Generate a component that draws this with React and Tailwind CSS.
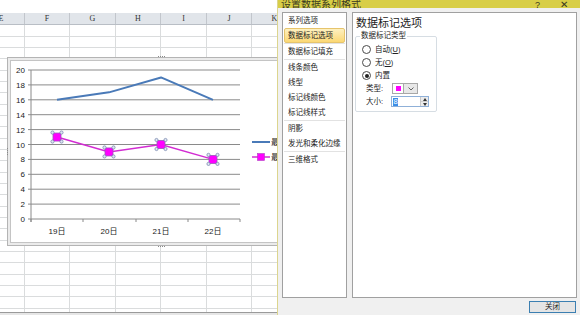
import React from "react";

const COLS = [
  { l: "E", w: "w-[47px] -ml-[22px]" },
  { l: "F", w: "w-[45px]" },
  { l: "G", w: "w-[46px]" },
  { l: "H", w: "w-[45px]" },
  { l: "I", w: "w-[46px]" },
  { l: "J", w: "w-[45px]" },
  { l: "K", w: "w-[46px]" },
];

const ROWS = Array.from({ length: 26 }, (_, i) => (i % 3 === 0 ? "h-[12px]" : "h-[11px]"));

const yv = (v) => 219 - v * 7.45;
const XS = [57, 109, 161, 213];
const S1 = [16, 17, 19, 16];
const S2 = [11, 9, 10, 8];

function Marker({ x, y }) {
  return (
    <g>
      <rect x={x - 4} y={y - 4} width="8" height="8" fill="#ff00ff" stroke="#a050c0" strokeWidth="0.8" />
      {[
        [x - 4.5, y - 4.5],
        [x + 4.5, y - 4.5],
        [x - 4.5, y + 4.5],
        [x + 4.5, y + 4.5],
      ].map(([cx, cy], i) => (
        <circle key={i} cx={cx} cy={cy} r="1.6" fill="#dfe5f2" stroke="#6f7fa8" strokeWidth="0.7" />
      ))}
    </g>
  );
}

function Chart() {
  const grid = Array.from({ length: 11 }, (_, i) => i * 2);
  return (
    <div className="absolute left-[7px] top-[57px] w-[295px] h-[189px] border border-[#b4b4b4] bg-[#ebebeb] p-[2px]">
      <div className="w-full h-full border border-[#c4c4c4] bg-white">
        <svg width="287" height="181" viewBox="11 61 287 181" className="block">
          {grid.map((v) => (
            <g key={v}>
              <line x1="28" x2="240" y1={yv(v)} y2={yv(v)} stroke="#8a8a8a" strokeWidth="1" />
              <text x="25" y={yv(v) + 3} textAnchor="end" fontSize="8" fill="#222" fontFamily="Liberation Sans, sans-serif">
                {v}
              </text>
            </g>
          ))}
          <line x1="31" x2="31" y1={yv(20)} y2={yv(0) + 3} stroke="#8a8a8a" strokeWidth="1" />
          {[31, 83, 136, 188, 240].map((x) => (
            <line key={x} x1={x} x2={x} y1={yv(0)} y2={yv(0) + 3} stroke="#8a8a8a" strokeWidth="1" />
          ))}
          {["19日", "20日", "21日", "22日"].map((t, i) => (
            <text key={t} x={XS[i]} y="234" textAnchor="middle" fontSize="8" fill="#222" fontFamily="Liberation Sans, Noto Sans CJK SC, sans-serif">
              {t}
            </text>
          ))}
          <polyline
            points={XS.map((x, i) => `${x},${yv(S1[i])}`).join(" ")}
            fill="none"
            stroke="#4a7ab8"
            strokeWidth="2"
            strokeLinejoin="round"
          />
          <polyline
            points={XS.map((x, i) => `${x},${yv(S2[i])}`).join(" ")}
            fill="none"
            stroke="#d22cd2"
            strokeWidth="1.5"
          />
          {XS.map((x, i) => (
            <Marker key={i} x={x} y={yv(S2[i])} />
          ))}
          <line x1="252" x2="270" y1="142" y2="142" stroke="#4a7ab8" strokeWidth="2" />
          <text x="271" y="145" fontSize="8" fill="#222" fontFamily="Noto Sans CJK SC, sans-serif">最</text>
          <line x1="252" x2="270" y1="157" y2="157" stroke="#d22cd2" strokeWidth="1.5" />
          <rect x="257.5" y="153.5" width="7" height="7" fill="#ff00ff" stroke="#b040c0" strokeWidth="0.6" />
          <text x="271" y="160" fontSize="8" fill="#222" fontFamily="Noto Sans CJK SC, sans-serif">最</text>
        </svg>
      </div>
      <div className="absolute left-[150px] top-[-2px] flex gap-[1px]">
        {[0, 1, 2, 3].map((i) => (
          <span key={i} className="w-[1px] h-[1px] bg-[#8a8a8a]" />
        ))}
      </div>
      <div className="absolute left-[150px] bottom-[-2px] flex gap-[1px]">
        {[0, 1, 2, 3].map((i) => (
          <span key={i} className="w-[1px] h-[1px] bg-[#8a8a8a]" />
        ))}
      </div>
      <div className="absolute left-[-1px] top-[90px] flex flex-col gap-[1px]">
        {[0, 1, 2, 3].map((i) => (
          <span key={i} className="w-[1px] h-[1px] bg-[#8a8a8a]" />
        ))}
      </div>
    </div>
  );
}

function Sheet() {
  return (
    <div className="flex flex-col h-full">
      <div className="h-[13px] shrink-0" />
      <div className="flex h-[12px] shrink-0 bg-[#e1e5ea] border-b border-[#b9bec5]">
        {COLS.map((c) => (
          <div
            key={c.l}
            className={`${c.w} shrink-0 border-r border-[#c2c6cc] flex items-center justify-center text-[8px] leading-none text-[#333] font-['Liberation_Serif',serif]`}
          >
            {c.l}
          </div>
        ))}
      </div>
      <div className="flex-1 overflow-hidden">
        {ROWS.map((h, r) => (
          <div key={r} className={`flex ${h} border-b border-[#dadcdd]`}>
            {COLS.map((c) => (
              <div key={c.l} className={`${c.w} shrink-0 border-r border-[#dadcdd]`} />
            ))}
          </div>
        ))}
      </div>
      <div className="h-[3px] shrink-0 border-t border-[#9a9a9a] bg-[#e6e6e6]" />
    </div>
  );
}

const LIST = [
  { t: "系列选项" },
  { t: "数据标记选项", sel: true },
  { sep: true },
  { t: "数据标记填充" },
  { sep: true },
  { t: "线条颜色" },
  { t: "线型" },
  { t: "标记线颜色" },
  { t: "标记线样式" },
  { sep: true },
  { t: "阴影" },
  { t: "发光和柔化边缘" },
  { sep: true },
  { t: "三维格式" },
];

function Radio({ on, children }) {
  return (
    <div className="flex items-center h-[13px] pl-[6px] gap-[4px]">
      <span className="w-[9px] h-[9px] rounded-full border border-[#4a4a4a] bg-white flex items-center justify-center">
        {on && <span className="w-[4px] h-[4px] rounded-full bg-[#222]" />}
      </span>
      <span className="text-[7.5px] leading-none text-[#222]">{children}</span>
    </div>
  );
}

function Dialog() {
  return (
    <div className="absolute left-[277px] top-0 w-[303px] h-[315px] flex flex-col bg-[#f0f0f0] border-l border-[#dcd58e]">
      <div className="h-[8px] shrink-0 bg-[#d8ce47] flex items-end overflow-hidden pl-[3px] pr-[12px]">
        <span className="text-[10px] leading-[12px] -mb-[3px] text-[#3a3a20]">设置数据系列格式</span>
        <span className="ml-auto text-[9px] leading-[12px] -mb-[3px] text-[#3a3a20]">?</span>
        <span className="ml-[20px] text-[10px] leading-[12px] -mb-[3px] text-[#3a3a20]">✕</span>
      </div>
      <div className="flex gap-[5px] pl-[4px] pt-[4px]">
        <div className="w-[65px] h-[286px] bg-white border border-[#a0a0a0] flex flex-col">
          {LIST.map((it, i) =>
            it.sep ? (
              <div key={i} className="h-[1px] mx-[1px] bg-[#e2e2e2]" />
            ) : it.sel ? (
              <div
                key={i}
                className="h-[15px] mx-[1px] rounded-[2px] border border-[#e6c46c] bg-gradient-to-b from-[#fdf0c0] to-[#fbd873] flex items-center pl-[3px] text-[7.5px] leading-none text-[#222]"
              >
                {it.t}
              </div>
            ) : (
              <div key={i} className="h-[15px] flex items-center pl-[5px] text-[7.5px] leading-none text-[#222]">
                {it.t}
              </div>
            )
          )}
        </div>
        <div className="w-[225px] h-[286px] bg-white border border-[#a0a0a0] pl-[3px] pt-[3px]">
          <div className="text-[11px] leading-[14px] text-[#222]">数据标记选项</div>
          <fieldset className="mt-[1px] -ml-[1px] w-[82px] border border-[#d6dde3] rounded-[2px] pb-[3px]">
            <legend className="ml-[4px] px-[1px] text-[7.5px] leading-[10px] text-[#222]">数据标记类型</legend>
            <div className="pt-[2px]">
              <Radio>
                自动(<u>U</u>)
              </Radio>
              <Radio>
                无(<u>O</u>)
              </Radio>
              <Radio on>内置</Radio>
              <div className="flex items-center h-[13px] pl-[10px]">
                <span className="w-[26px] text-[7.5px] leading-none text-[#222]">类型:</span>
                <div className="flex h-[11px]">
                  <div className="w-[12px] h-full border border-[#a8a8a8] bg-white flex items-center justify-center">
                    <span className="w-[5px] h-[5px] bg-[#ff00ff]" />
                  </div>
                  <div className="w-[14px] h-full border border-l-0 border-[#a8a8a8] bg-[#e8e8e8] flex items-center justify-center">
                    <svg width="6" height="4" viewBox="0 0 6 4">
                      <path d="M0.5 0.5 L3 3 L5.5 0.5" fill="none" stroke="#555" strokeWidth="0.9" />
                    </svg>
                  </div>
                </div>
              </div>
              <div className="flex items-center h-[13px] pl-[10px]">
                <span className="w-[25px] text-[7.5px] leading-none text-[#222]">大小:</span>
                <div className="flex w-[38px] h-[11px] border border-[#8fb0d8] bg-white">
                  <div className="flex-1 flex items-center pl-[1px]">
                    <span className="bg-[#3b8ee8] text-white text-[7.5px] leading-[8px] px-[0.5px]">8</span>
                  </div>
                  <div className="w-[8px] flex flex-col border-l border-[#c8c8c8] bg-[#ececec]">
                    <div className="flex-1 flex items-center justify-center">
                      <svg width="4" height="3" viewBox="0 0 4 3">
                        <path d="M0 3 L2 0 L4 3 Z" fill="#333" />
                      </svg>
                    </div>
                    <div className="flex-1 flex items-center justify-center border-t border-[#d0d0d0]">
                      <svg width="4" height="3" viewBox="0 0 4 3">
                        <path d="M0 0 L2 3 L4 0 Z" fill="#333" />
                      </svg>
                    </div>
                  </div>
                </div>
              </div>
            </div>
          </fieldset>
        </div>
      </div>
      <div className="flex justify-end pr-[4px] mt-[3px]">
        <button className="w-[47px] h-[12px] border border-[#3c7fb1] bg-[#e5e5e5] text-[7.5px] leading-none text-[#222] flex items-center justify-center">
          关闭
        </button>
      </div>
    </div>
  );
}

export default function App() {
  return (
    <div className="relative w-[580px] h-[315px] overflow-hidden bg-white font-['Liberation_Sans','Noto_Sans_CJK_SC',sans-serif]">
      <Sheet />
      <Chart />
      <Dialog />
    </div>
  );
}
